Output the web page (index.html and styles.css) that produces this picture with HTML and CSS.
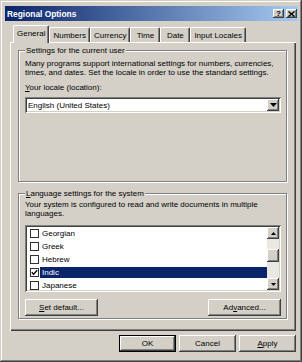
FILE: index.html
```html
<!DOCTYPE html>
<html lang="en">
<head>
<meta charset="utf-8">
<title>Regional Options</title>
<link rel="stylesheet" href="styles.css">
</head>
<body>
<div class="window">
  <div class="titlebar">
    <span class="title">Regional Options</span>
    <div class="caption-btns">
      <span class="cbtn cbtn-help">?</span>
      <span class="cbtn"><svg width="7" height="6" viewBox="0 0 7 6"><path d="M0.5 0.5L6.5 5.5M6.5 0.5L0.5 5.5" stroke="#000" stroke-width="1.4"/></svg></span>
    </div>
  </div>
  <div class="tabs">
    <div class="tab tab-active">General</div>
    <div class="tab">Numbers</div>
    <div class="tab">Currency</div>
    <div class="tab">Time</div>
    <div class="tab">Date</div>
    <div class="tab">Input Locales</div>
  </div>
  <div class="panel">
    <div class="group group-user">
      <div class="legend">Settings for the current user</div>
      <p class="text">Many programs support international settings for numbers, currencies,<br>times, and dates. Set the locale in order to use the standard settings.</p>
      <div class="label"><u>Y</u>our locale (location):</div>
      <div class="combo">
        <span class="combo-value">English (United States)</span>
        <span class="combo-btn"><svg width="7" height="4" viewBox="0 0 7 4"><path d="M0 0H7L3.5 4Z" fill="#000"/></svg></span>
      </div>
    </div>
    <div class="group group-system">
      <div class="legend"><u>L</u>anguage settings for the system</div>
      <p class="text">Your system is configured to read and write documents in multiple<br>languages.</p>
      <div class="listbox">
        <ul class="items">
          <li class="item"><span class="check"></span><span class="item-label">Georgian</span></li>
          <li class="item"><span class="check"></span><span class="item-label">Greek</span></li>
          <li class="item"><span class="check"></span><span class="item-label">Hebrew</span></li>
          <li class="item item-selected"><span class="check"><svg width="7" height="7" viewBox="0 0 7 7"><path d="M0.8 3.2L2.6 5.2L6.2 1.2" stroke="#000" stroke-width="1.3" fill="none"/></svg></span><span class="item-label">Indic</span></li>
          <li class="item"><span class="check"></span><span class="item-label">Japanese</span></li>
        </ul>
        <div class="scrollbar">
          <span class="sb-btn"><svg width="5" height="3" viewBox="0 0 5 3"><path d="M0 3H5L2.5 0Z" fill="#000"/></svg></span>
          <span class="sb-track sb-track-top"></span>
          <span class="sb-thumb"></span>
          <span class="sb-track"></span>
          <span class="sb-btn"><svg width="5" height="3" viewBox="0 0 5 3"><path d="M0 0H5L2.5 3Z" fill="#000"/></svg></span>
        </div>
      </div>
      <div class="group-actions">
        <button class="btn btn-wide"><u>S</u>et default...</button>
        <button class="btn btn-wide">Ad<u>v</u>anced...</button>
      </div>
    </div>
  </div>
  <div class="dialog-actions">
    <button class="btn btn-default">OK</button>
    <button class="btn">Cancel</button>
    <button class="btn"><u>A</u>pply</button>
  </div>
</div>
</body>
</html>
```
FILE: styles.css
```css
html, body {
  margin: 0;
  padding: 0;
  background: #d4d0c8;
}

.window {
  width: 302px;
  height: 362px;
  box-sizing: border-box;
  padding: 6px 4px 0 5px;
  background: #d4d0c8;
  box-shadow: inset -1px -1px #404040, inset 1px 1px #d4d0c8, inset -2px -2px #808080, inset 2px 2px #fff;
  font-family: "Liberation Sans", Arial, sans-serif;
  font-size: 8px;
  color: #000;
}

.titlebar {
  height: 15px;
  display: flex;
  align-items: center;
  justify-content: space-between;
  padding: 0 1px 0 2px;
  background: linear-gradient(to right, #0a246a, #a6caf0);
}

.title {
  color: #fff;
  font-weight: bold;
  font-size: 8.4px;
}

.caption-btns {
  display: flex;
  gap: 2px;
}

.cbtn {
  width: 11px;
  height: 9px;
  box-sizing: border-box;
  display: flex;
  align-items: center;
  justify-content: center;
  background: #d4d0c8;
  box-shadow: inset -1px -1px #404040, inset 1px 1px #fff, inset -2px -2px #808080;
}

.cbtn-help {
  font-weight: bold;
  font-size: 8px;
  line-height: 1;
}

.tabs {
  display: flex;
  align-items: flex-end;
  height: 17px;
  margin: 4px 0 0 8px;
}

.tab {
  height: 15px;
  min-width: 30px;
  box-sizing: border-box;
  padding: 0 3px;
  display: flex;
  align-items: center;
  justify-content: center;
  border-top: 1px solid #fff;
  border-left: 1px solid #fff;
  border-right: 1px solid #404040;
  border-radius: 2px 2px 0 0;
  box-shadow: inset -1px 0 #808080;
  background: #d4d0c8;
}

.tab-active {
  height: 18px;
  margin-bottom: -1px;
  padding: 0 3px 2px;
  position: relative;
  z-index: 1;
}

.panel {
  width: 286px;
  height: 289px;
  box-sizing: border-box;
  margin-left: 5px;
  padding: 8px 9px 0 8px;
  box-shadow: inset 1px 1px #fff, inset -1px -1px #404040, inset -2px -2px #808080;
}

.group {
  box-sizing: border-box;
  border: 1px solid #808080;
  box-shadow: 1px 1px 0 #fff, inset 1px 1px 0 #fff;
  padding: 0 5px 0 6px;
}

.group-user {
  height: 132px;
}

.group-system {
  height: 126px;
  margin-top: 11px;
}

.legend {
  margin-top: -5px;
  height: 10px;
  line-height: 10px;
  width: fit-content;
  padding: 0 1px;
  background: #d4d0c8;
}

.text {
  margin: 3px 0 0;
  line-height: 9px;
}

.group-system .text {
  margin-top: 1px;
}

.label {
  margin-top: 6px;
  line-height: 9px;
}

.combo {
  margin-top: 5px;
  height: 16px;
  box-sizing: border-box;
  padding: 2px;
  display: flex;
  align-items: center;
  background: #fff;
  box-shadow: inset 1px 1px #808080, inset -1px -1px #fff, inset 2px 2px #404040, inset -2px -2px #d4d0c8;
}

.combo-value {
  flex: 1;
  padding-left: 1px;
}

.combo-btn {
  width: 12px;
  height: 12px;
  display: flex;
  align-items: center;
  justify-content: center;
  background: #d4d0c8;
  box-shadow: inset -1px -1px #404040, inset 1px 1px #fff, inset -2px -2px #808080;
}

.listbox {
  margin-top: 7px;
  height: 67px;
  box-sizing: border-box;
  padding: 2px;
  display: flex;
  background: #fff;
  box-shadow: inset 1px 1px #808080, inset -1px -1px #fff, inset 2px 2px #404040, inset -2px -2px #d4d0c8;
}

.items {
  flex: 1;
  margin: 0;
  padding: 0;
  list-style: none;
  overflow: hidden;
}

.item {
  height: 13px;
  display: flex;
  align-items: center;
  padding-left: 3px;
}

.check {
  flex: none;
  width: 9px;
  height: 9px;
  box-sizing: border-box;
  margin-right: 1px;
  display: flex;
  align-items: center;
  justify-content: center;
  border: 1px solid #303030;
  background: #fff;
}

.item-label {
  flex: 1;
  height: 11px;
  line-height: 11px;
  padding-left: 2px;
}

.item-selected .item-label {
  background: #0a246a;
  color: #fff;
}

.scrollbar {
  width: 12px;
  display: flex;
  flex-direction: column;
  background: #eae8e3;
}

.sb-btn,
.sb-thumb {
  flex: none;
  display: flex;
  align-items: center;
  justify-content: center;
  background: #d4d0c8;
  box-shadow: inset -1px -1px #404040, inset 1px 1px #fff, inset -2px -2px #808080;
}

.sb-btn {
  height: 12px;
}

.sb-thumb {
  height: 13px;
}

.sb-track {
  flex: 1;
}

.sb-track-top {
  flex: none;
  height: 10px;
}

.group-actions {
  margin-top: 7px;
  display: flex;
  justify-content: space-between;
}

.btn {
  height: 17px;
  padding: 0;
  border: 0;
  font: inherit;
  color: #000;
  background: #d4d0c8;
  box-shadow: inset -1px -1px #404040, inset 1px 1px #fff, inset -2px -2px #808080;
}

.btn-wide {
  width: 73px;
}

.dialog-actions {
  width: 286px;
  margin: 4px 0 0 5px;
  display: flex;
  justify-content: flex-end;
  gap: 3px;
}

.dialog-actions .btn {
  width: 57px;
}

.dialog-actions .btn-default {
  box-shadow: inset 0 0 0 1px #000, inset -2px -2px #404040, inset 2px 2px #fff, inset -3px -3px #808080;
}
```
